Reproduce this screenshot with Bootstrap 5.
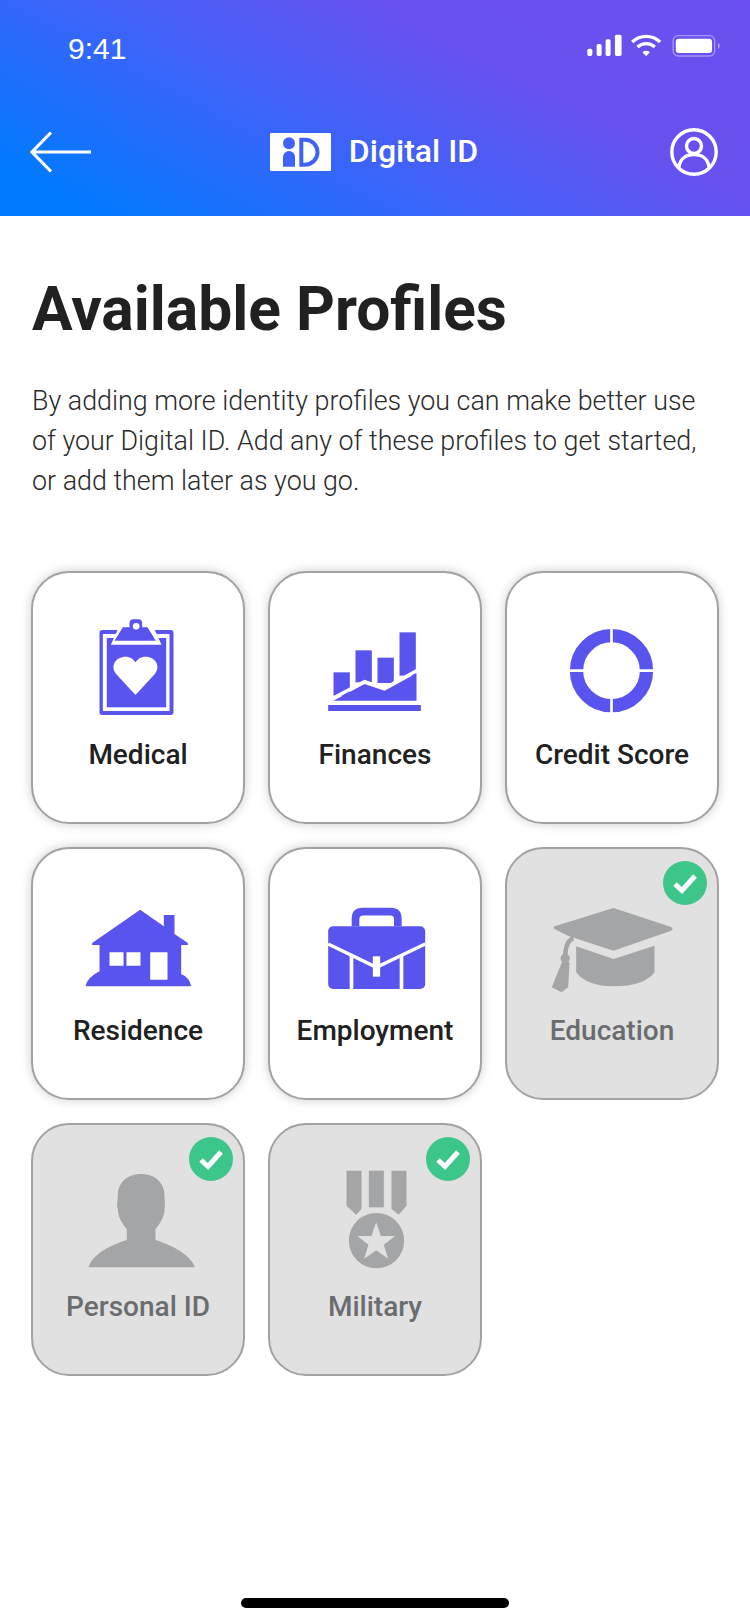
<!DOCTYPE html>
<html lang="en">

<head>
    <meta charset="UTF-8">
    <meta name="viewport" content="width=device-width, initial-scale=1">
    <title>Digital ID - Available Profiles</title>
    <link href="https://cdn.jsdelivr.net/npm/bootstrap@5.3.0/dist/css/bootstrap.min.css" rel="stylesheet">
    <style>
        body { font-family: Roboto, "Liberation Sans", sans-serif; background: #fff; }
        .phone-page { width: 750px; height: 1624px; overflow: hidden; }
        .top-head { height: 216px; color: #fff; background: linear-gradient(28deg, #007aff 8%, #3f62f8 42%, #6851ef 68%, #6b4ff0 100%); }
        .status-row { height: 94px; padding-left: 68px; padding-right: 27px; }
        .status-time { font-family: "Liberation Sans", sans-serif; font-size: 30px; color: #fff; padding-top: 3px; }
        .status-icons { margin-bottom: 4px; }
        .nav-row { height: 116px; padding-left: 30px; padding-right: 32px; }
        .nav-side { width: 61px; }
        .nav-name { font-size: 32px; font-weight: 500; margin-left: 18px; line-height: 1; padding-bottom: 2px; }
        .page-body { padding: 0 29px 0 31px; }
        .page-title { font-size: 60.500px; font-weight: 700; color: #212121; margin: 0 0 0 1px; line-height: 70px; padding-top: 59px; }
        .page-text { font-size: 26.850px; font-weight: 300; color: #2b2b2b; line-height: 40px; margin: 36px 0 0 1px; }
        .tile-grid { display: grid; grid-template-columns: repeat(3, 214px); grid-auto-rows: 253px; column-gap: 23px; row-gap: 23px; margin-top: 70px; }
        .profile-tile { border: 2px solid #a2a2a2; border-radius: 38px; background: #fff; box-shadow: 0 0 11px rgba(0, 0, 0, .2); padding-top: 38px; color: #212121; }
        .profile-tile svg.tile-icon { display: block; margin: 0 auto; fill: #5a54ee; }
        .tile-name { font-size: 28px; font-weight: 500; line-height: 36px; margin-top: 14px; }
        .tile-done { background: #e1e1e1; box-shadow: none; color: #6a6d70; }
        .profile-tile.tile-done svg.tile-icon { fill: #a3a5a7; }
        .done-mark { top: 12px; right: 10px; width: 44px; height: 44px; }
        .home-bar { width: 268px; height: 10px; background: #000; border-radius: 5px; margin-bottom: 16px; }
    </style>
</head>

<body>
    <div class="phone-page d-flex flex-column">
        <header class="top-head">
            <div class="status-row d-flex align-items-center justify-content-between">
                <span class="status-time">9:41</span>
                <svg class="status-icons" width="138" height="25" viewBox="30 25 415 75" fill="#fff">
                    <rect x="37" y="72" width="15" height="22" rx="5" />
                    <rect x="65" y="58" width="15" height="36" rx="5" />
                    <rect x="92" y="44" width="15" height="50" rx="5" />
                    <rect x="120" y="30" width="20" height="64" rx="5" />
                    <path d="M172 52 a60 60 0 0 1 84 0" fill="none" stroke="#fff" stroke-width="10" />
                    <path d="M188 67 a38 38 0 0 1 52 0" fill="none" stroke="#fff" stroke-width="10" />
                    <path d="M203 83 a16 16 0 0 1 22 0 l-11 12z" />
                    <rect x="295" y="33" width="125" height="61" rx="15" fill="none" stroke="#fff" stroke-opacity=".4" stroke-width="4" />
                    <rect x="303" y="42" width="109" height="43" rx="9" />
                    <path d="M430 55 c6 2 7 15 0 17z" fill-opacity=".5" />
                </svg>
            </div>
            <div class="nav-row d-flex align-items-center justify-content-between">
                <div class="nav-side">
                    <svg class="d-block" width="61" height="42" viewBox="0 0 61 42" fill="none" stroke="#fff" stroke-width="3.200">
                        <path d="M61 21H2M21 1.500 2 21l19 19.500" />
                    </svg>
                </div>
                <div class="d-flex align-items-center">
                    <svg width="61" height="38" viewBox="30 36 183 114">
                        <rect x="30" y="36" width="183" height="114" rx="3" fill="#fff" />
                        <circle cx="87" cy="67" r="18" fill="#3f62f8" />
                        <path d="M69 137V108a18 18 0 0 1 36 0v29z" fill="#3f62f8" />
                        <path d="M118 50h17a43.500 43.500 0 0 1 0 87h-17z" fill="#3f62f8" />
                        <path d="M130 62h5a31.500 31.500 0 0 1 0 63h-5z" fill="#fff" />
                    </svg>
                    <span class="nav-name">Digital ID</span>
                </div>
                <div class="nav-side d-flex justify-content-end">
                    <svg width="48" height="48" viewBox="0 0 48 48" fill="none" stroke="#fff" stroke-width="3.400">
                        <circle cx="24" cy="24" r="22.200" />
                        <circle cx="24" cy="18" r="7.500" />
                        <path d="M9 39c1-8 7-12.500 15-12.500S38 31 39 39" />
                    </svg>
                </div>
            </div>
        </header>

        <main class="page-body">
            <h1 class="page-title">Available Profiles</h1>
            <p class="page-text">By adding more identity profiles you can make better use of your Digital ID. Add any of these profiles to get started, or add them later as you go.</p>

            <div class="tile-grid">
                <div class="profile-tile text-center">
                    <svg class="tile-icon" width="130" height="112" viewBox="160.500 156 390 336">
                        <rect x="240" y="213" width="222" height="255" rx="8" />
                        <rect x="250" y="225" width="200" height="231" fill="#fff" />
                        <rect x="262" y="237" width="178" height="208" />
                        <path d="M298 205h104l24 52H274z" fill="#fff" />
                        <path d="M330 205v-12q0-12 12-12h14q12 0 12 12v12h16l25 40H285l25-40z" />
                        <circle cx="350" cy="202" r="10" fill="#fff" />
                        <path d="M348 408 290 345C270 320 290 293 318 293c14 0 24 7 30 17 6-10 16-17 30-17 28 0 48 27 28 52z" fill="#fff" />
                    </svg>
                    <div class="tile-name">Medical</div>
                </div>
                <div class="profile-tile text-center">
                    <svg class="tile-icon" width="130" height="112" viewBox="148.500 156 390 336">
                        <path d="M219 340h49v70l-49 0z" />
                        <rect x="285" y="274" width="49" height="96" />
                        <rect x="351" y="296" width="49" height="76" />
                        <rect x="417" y="220" width="49" height="130" />
                        <path d="M219 425 312 375 372 395 468 343v82z" />
                        <path d="M217 418 312 368 372 388 468 335" fill="none" stroke="#fff" stroke-width="10" />
                        <rect x="203" y="438" width="278" height="18" />
                    </svg>
                    <div class="tile-name">Finances</div>
                </div>
                <div class="profile-tile text-center">
                    <svg class="tile-icon" width="130" height="112" viewBox="142.500 156 390 336">
                        <circle cx="336" cy="335" r="105" fill="none" stroke="#5a54ee" stroke-width="40" />
                        <path d="M336 200V470M201 335H471" stroke="#fff" stroke-width="8" />
                    </svg>
                    <div class="tile-name">Credit Score</div>
                </div>
                <div class="profile-tile text-center">
                    <svg class="tile-icon" width="130" height="112" viewBox="160.500 144 390 336">
                        <path d="M362 212 433 262V228h32v57l40 27v6H485v87q25 10 30 37H198q5-27 42-45V318H218v-6z" />
                        <path d="M270 340h42v40h-42zM321 340h42v40h-42zM392 340h52v82h-52z" fill="#fff" />
                    </svg>
                    <div class="tile-name">Residence</div>
                </div>
                <div class="profile-tile text-center">
                    <svg class="tile-icon" width="130" height="112" viewBox="148.500 144 390 336">
                        <path d="M285 262V240q0-22 22-22h83q22 0 22 22v22" fill="none" stroke="#5a54ee" stroke-width="23" />
                        <rect x="203" y="262" width="291" height="188" rx="15" />
                        <path d="M203 315 348 385 494 315" fill="none" stroke="#fff" stroke-width="10" />
                        <path d="M273 350V450M423 350V450" stroke="#fff" stroke-width="11" />
                        <rect x="337" y="352" width="22" height="61" fill="#fff" />
                    </svg>
                    <div class="tile-name">Employment</div>
                </div>
                <div class="profile-tile tile-done text-center position-relative">
                    <svg class="done-mark position-absolute" viewBox="0 0 44 44">
                        <circle cx="22" cy="22" r="22" fill="#3cc68a" />
                        <path d="M12 23l7 6.500L32 15" fill="none" stroke="#fff" stroke-width="5" />
                    </svg>
                    <svg class="tile-icon" width="130" height="112" viewBox="142.500 144 390 336">
                        <path d="M342 207 515 264q8 6 0 11L342 335 205 290 165 270q-6-4 0-8z" />
                        <path d="M230 322 342 360 465 320v80q-30 42-123 42-80 0-112-42z" />
                        <path d="M222 298Q197 305 197 360" fill="none" stroke="#a3a5a7" stroke-width="14" />
                        <circle cx="197" cy="358" r="14" />
                        <path d="M187 370h23l-4 75-20 15-29-15z" />
                    </svg>
                    <div class="tile-name">Education</div>
                </div>
                <div class="profile-tile tile-done text-center position-relative">
                    <svg class="done-mark position-absolute" viewBox="0 0 44 44">
                        <circle cx="22" cy="22" r="22" fill="#3cc68a" />
                        <path d="M12 23l7 6.500L32 15" fill="none" stroke="#fff" stroke-width="5" />
                    </svg>
                    <svg class="tile-icon" width="130" height="112" viewBox="160.500 147 390 336">
                        <path d="M207 460C220 420 270 395 322 378V345C300 320 295 300 295 285 290 275 295 260 295 245 295 205 325 180 365 180S435 205 435 245C435 260 438 275 435 285 435 300 430 320 408 345V378C460 395 510 420 527 460z" />
                    </svg>
                    <div class="tile-name">Personal ID</div>
                </div>
                <div class="profile-tile tile-done text-center position-relative">
                    <svg class="done-mark position-absolute" viewBox="0 0 44 44">
                        <circle cx="22" cy="22" r="22" fill="#3cc68a" />
                        <path d="M12 23l7 6.500L32 15" fill="none" stroke="#fff" stroke-width="5" />
                    </svg>
                    <svg class="tile-icon" width="130" height="112" viewBox="148.500 147 390 336">
                        <path d="M258 170h45V285l-16 17-29-27z" />
                        <rect x="325" y="170" width="45" height="110" />
                        <path d="M393 170h45V275l-23 27-22-17z" />
                        <circle cx="348" cy="380" r="83" />
                        <path d="M347 325l14 41h43l-34 26 13 42-36-25-36 25 13-42-34-26h43z" fill="#e1e1e1" />
                    </svg>
                    <div class="tile-name">Military</div>
                </div>
            </div>
        </main>

        <div class="home-bar mt-auto mx-auto"></div>
    </div>

    <script src="https://cdn.jsdelivr.net/npm/bootstrap@5.3.0/dist/js/bootstrap.bundle.min.js"></script>
</body>

</html>
